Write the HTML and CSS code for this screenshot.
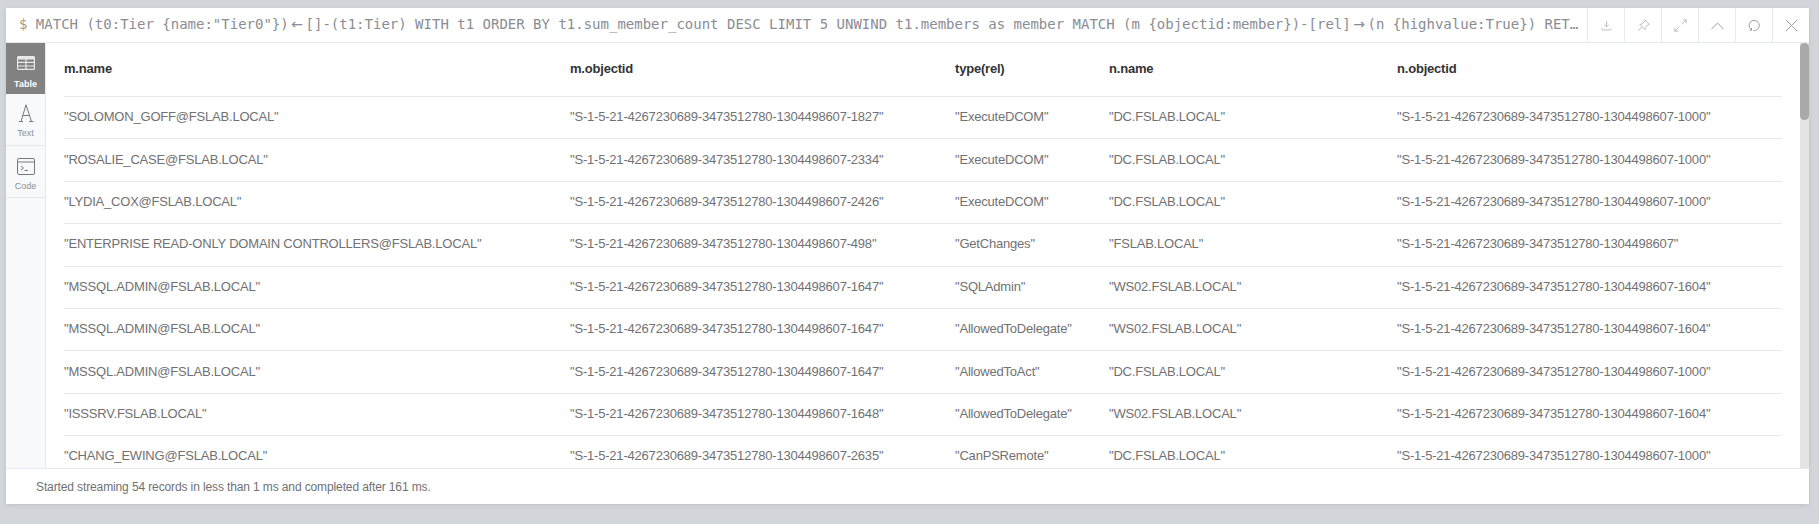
FILE: index.html
```html
<!DOCTYPE html>
<html lang="en">
<head>
<meta charset="UTF-8">
<title>Neo4j Browser</title>
<link rel="stylesheet" href="styles.css">
</head>
<body>
<div class="frame">
  <div class="frame-head">
    <div class="query"><span class="prompt">$</span> MATCH (t0:Tier {name:"Tier0"})<span class="lig">←</span>[]-(t1:Tier) WITH t1 ORDER BY t1.sum_member_count DESC LIMIT 5 UNWIND t1.members as member MATCH (m {objectid:member})-[rel]<span class="lig">→</span>(n {highvalue:True}) RET…</div>
    <button class="head-btn">
      <svg viewBox="0 0 16 16"><path d="M8 2.500v7M5.200 7 8 9.800 10.800 7" /><path d="M2 11.500c0 1.500.8 2 2 2h8c1.200 0 2-.5 2-2" /></svg>
    </button>
    <button class="head-btn">
      <svg viewBox="0 0 16 16"><path d="M9.500 1 15 6.500l-1.500.6-3.300 3.400-.3 2.500L3.500 6.600l2.500-.4 3.300-3.300zM6 10l-4.500 4.500" /></svg>
    </button>
    <button class="head-btn">
      <svg viewBox="0 0 16 16"><path d="M9.500 6.500 15 1M11 1h4v4M6.500 9.500 1 15M1 11v4h4" /></svg>
    </button>
    <button class="head-btn dark">
      <svg viewBox="0 0 16 16"><path d="M.5 12.500 8 5l7.500 7.500" /></svg>
    </button>
    <button class="head-btn dark">
      <svg viewBox="0 0 16 16"><path d="M4.500 13.500A6.300 6.300 0 1 1 8 14.300H6.500M4.300 11V13.800H1.800" /></svg>
    </button>
    <button class="head-btn dark">
      <svg viewBox="0 0 16 16"><path d="M1 1l14 14M15 1 1 15" /></svg>
    </button>
  </div>
  <div class="frame-main">
    <div class="side-tabs">
      <div class="tab active">
        <svg viewBox="0 0 18 14" class="tab-icon tab-table"><path class="fill" d="M0 1.500Q0 0 1.500 0h15Q18 0 18 1.500v11Q18 14 16.500 14h-15Q0 14 0 12.500zM1.200 3.400v2.400h7.200V3.400zm8.400 0v2.400h7.200V3.400zM1.200 7v2.400h7.200V7zm8.400 0v2.400h7.200V7zM1.200 10.600v2.200h7.200v-2.200zm8.400 0v2.200h7.200v-2.200z"/></svg>
        <span>Table</span>
      </div>
      <div class="tab">
        <svg viewBox="0 0 16 18" class="tab-icon tab-text"><path d="M1 17.500h4M11 17.500h4.500M3 17.500 8 .8l5.500 16.700M4.800 11.500h7" /></svg>
        <span>Text</span>
      </div>
      <div class="tab">
        <svg viewBox="0 0 18 17" class="tab-icon tab-code"><rect x=".5" y=".5" width="17" height="16" rx="1.500"/><path d="M.5 4h17M4 8l2.500 2L4 12M7.500 12.500h3.500" /></svg>
        <span>Code</span>
      </div>
    </div>
    <div class="results">
      <table class="result-table">
        <thead>
          <tr><th class="col-a">m.name</th><th class="col-b">m.objectid</th><th class="col-c">type(rel)</th><th class="col-d">n.name</th><th>n.objectid</th></tr>
        </thead>
        <tbody>
          <tr><td>"SOLOMON_GOFF@FSLAB.LOCAL"</td><td>"S-1-5-21-4267230689-3473512780-1304498607-1827"</td><td>"ExecuteDCOM"</td><td>"DC.FSLAB.LOCAL"</td><td>"S-1-5-21-4267230689-3473512780-1304498607-1000"</td></tr>
          <tr><td>"ROSALIE_CASE@FSLAB.LOCAL"</td><td>"S-1-5-21-4267230689-3473512780-1304498607-2334"</td><td>"ExecuteDCOM"</td><td>"DC.FSLAB.LOCAL"</td><td>"S-1-5-21-4267230689-3473512780-1304498607-1000"</td></tr>
          <tr><td>"LYDIA_COX@FSLAB.LOCAL"</td><td>"S-1-5-21-4267230689-3473512780-1304498607-2426"</td><td>"ExecuteDCOM"</td><td>"DC.FSLAB.LOCAL"</td><td>"S-1-5-21-4267230689-3473512780-1304498607-1000"</td></tr>
          <tr><td>"ENTERPRISE READ-ONLY DOMAIN CONTROLLERS@FSLAB.LOCAL"</td><td>"S-1-5-21-4267230689-3473512780-1304498607-498"</td><td>"GetChanges"</td><td>"FSLAB.LOCAL"</td><td>"S-1-5-21-4267230689-3473512780-1304498607"</td></tr>
          <tr><td>"MSSQL.ADMIN@FSLAB.LOCAL"</td><td>"S-1-5-21-4267230689-3473512780-1304498607-1647"</td><td>"SQLAdmin"</td><td>"WS02.FSLAB.LOCAL"</td><td>"S-1-5-21-4267230689-3473512780-1304498607-1604"</td></tr>
          <tr><td>"MSSQL.ADMIN@FSLAB.LOCAL"</td><td>"S-1-5-21-4267230689-3473512780-1304498607-1647"</td><td>"AllowedToDelegate"</td><td>"WS02.FSLAB.LOCAL"</td><td>"S-1-5-21-4267230689-3473512780-1304498607-1604"</td></tr>
          <tr><td>"MSSQL.ADMIN@FSLAB.LOCAL"</td><td>"S-1-5-21-4267230689-3473512780-1304498607-1647"</td><td>"AllowedToAct"</td><td>"DC.FSLAB.LOCAL"</td><td>"S-1-5-21-4267230689-3473512780-1304498607-1000"</td></tr>
          <tr><td>"ISSSRV.FSLAB.LOCAL"</td><td>"S-1-5-21-4267230689-3473512780-1304498607-1648"</td><td>"AllowedToDelegate"</td><td>"WS02.FSLAB.LOCAL"</td><td>"S-1-5-21-4267230689-3473512780-1304498607-1604"</td></tr>
          <tr><td>"CHANG_EWING@FSLAB.LOCAL"</td><td>"S-1-5-21-4267230689-3473512780-1304498607-2635"</td><td>"CanPSRemote"</td><td>"DC.FSLAB.LOCAL"</td><td>"S-1-5-21-4267230689-3473512780-1304498607-1000"</td></tr>
        </tbody>
      </table>
      <div class="scroll-track"><div class="scroll-thumb"></div></div>
    </div>
  </div>
  <div class="frame-foot">Started streaming 54 records in less than 1 ms and completed after 161 ms.</div>
</div>
</body>
</html>
```

FILE: styles.css
```css
html, body {
  height: 100%;
}
body {
  margin: 0;
  padding: 8px 10px 20px 6px;
  box-sizing: border-box;
  background-color: #d2d5da;
  font-family: "Liberation Sans", Arial, sans-serif;
  font-size: 13px;
  letter-spacing: -0.2px;
  color: #717172;
  overflow: hidden;
}
.frame {
  height: 100%;
  display: flex;
  flex-direction: column;
  background-color: #fff;
  box-shadow: 0 1px 4px rgba(0, 0, 0, 0.1);
}
.frame-head {
  display: flex;
  height: 35px;
  flex: none;
  border-bottom: 1px solid #e6e9ef;
  box-sizing: border-box;
}
.query {
  flex: 1;
  min-width: 0;
  padding-left: 13px;
  line-height: 33px;
  font-family: "DejaVu Sans Mono", monospace;
  font-size: 14px;
  letter-spacing: 0;
  color: #8a8d94;
  white-space: nowrap;
  overflow: hidden;
}
.prompt {
  color: #a89a7e;
}
.lig {
  display: inline-block;
  width: 16.8px;
  font-family: "DejaVu Sans", sans-serif;
  text-align: center;
}
.head-btn {
  width: 37px;
  flex: none;
  padding: 0;
  border: none;
  border-left: 1px solid #e6e9ef;
  background: none;
  display: flex;
  align-items: center;
  justify-content: center;
}
.head-btn svg {
  width: 13px;
  height: 13px;
  fill: none;
  stroke: #b4b6ba;
  stroke-width: 1.1;
}
.head-btn.dark svg {
  stroke: #919396;
}
.frame-main {
  flex: 1;
  min-height: 0;
  display: flex;
}
.side-tabs {
  width: 40px;
  flex: none;
  box-sizing: border-box;
  background-color: #f8f9fb;
  border-right: 1px solid #e6e9ef;
}
.tab {
  height: 52px;
  box-sizing: border-box;
  border-bottom: 1px solid #e6e9ef;
  display: flex;
  flex-direction: column;
  align-items: center;
  padding-top: 13px;
  font-size: 9px;
  letter-spacing: 0;
  color: #8e8e8e;
}
.tab span {
  margin-top: 6px;
}
.tab.active {
  height: 51px;
  background-color: #828282;
  color: #fff;
  border-bottom: none;
  font-weight: bold;
}
.tab.active span {
  margin-top: 9px;
}
.tab-icon {
  flex: none;
  fill: none;
  stroke: #797979;
  stroke-width: 1;
}
.tab-table {
  width: 18px;
  height: 14px;
}
.tab-table .fill {
  fill: #e8e8e8;
  fill-rule: evenodd;
  stroke: none;
}
.tab-text {
  width: 16px;
  height: 18px;
  margin-top: -3px;
}
.tab-code {
  width: 18px;
  height: 17px;
  margin-top: -1px;
}
.results {
  flex: 1;
  min-width: 0;
  position: relative;
  overflow: hidden;
  padding: 0 27px 0 18px;
}
.result-table {
  width: 100%;
  border-collapse: collapse;
  table-layout: fixed;
}
.result-table th {
  height: 51px;
  padding: 0 0 2px;
  text-align: left;
  font-weight: bold;
  color: #333;
  border-bottom: 1px solid #e6e9ef;
}
.result-table td {
  height: 39.400px;
  padding: 0 0 2px;
  border-bottom: 1px solid #e6e9ef;
  white-space: nowrap;
}
.col-a {
  width: 506px;
}
.col-b {
  width: 385px;
}
.col-c {
  width: 154px;
}
.col-d {
  width: 288px;
}
.scroll-track {
  position: absolute;
  top: 0;
  right: 0;
  bottom: 0;
  width: 9px;
  background-color: #e4e4e4;
}
.scroll-thumb {
  height: 77px;
  border-radius: 5px;
  background-color: #a9a9a9;
}
.frame-foot {
  height: 36px;
  flex: none;
  box-sizing: border-box;
  padding-left: 30px;
  border-top: 1px solid #e6e9ef;
  line-height: 37px;
  font-size: 12px;
  letter-spacing: -0.12px;
  color: #717172;
}
```
